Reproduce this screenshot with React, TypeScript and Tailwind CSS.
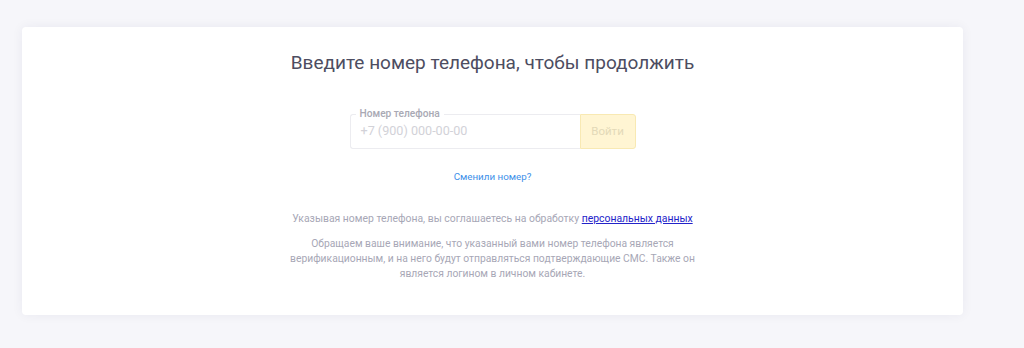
import React from 'react';

export default function App() {
  return (
    <div className="min-h-[348px] bg-[#f6f6fa] pt-[27px] pl-[22px]" style={{ fontFamily: 'Roboto, "Noto Sans", sans-serif' }}>
      <div className="flex h-[288px] w-[941px] flex-col items-center rounded-[4px] bg-white pt-[24px] shadow-[0_0_12px_rgba(40,40,80,0.06)]">
        <h1 className="text-[19px] leading-[24px] text-[#4d4d61]">Введите номер телефона, чтобы продолжить</h1>

        <div className="relative mt-[39px] flex h-[35px] w-[286px]">
          <div className="flex flex-1 items-center rounded-l-[3px] border border-r-0 border-[#ececf0] pl-[10px]">
            <span className="text-[12.6px] text-[#d2d2d8]">+7 (900) 000-00-00</span>
          </div>
          <button className="w-[56px] rounded-r-[3px] border border-[#f8e9b3] bg-[#fff5d3] text-[11.5px] text-[#e3d9b8]">
            Войти
          </button>
          <span className="absolute left-[6px] top-[-6px] bg-white px-[4px] text-[10.2px] leading-[12px] font-medium text-[#a9a9b4]">
            Номер телефона
          </span>
        </div>

        <a className="mt-[21px] text-[9.8px] leading-[14px] text-[#3d8fe9]">Сменили номер?</a>

        <p className="mt-[28px] text-[10.4px] leading-[14px] text-[#a7a7b6]">
          Указывая номер телефона, вы соглашаетесь на обработку{' '}
          <a className="text-[#2323c9] underline">персональных данных</a>
        </p>

        <p className="mt-[10px] max-w-[412px] text-center text-[10.3px] leading-[15px] text-[#a7a7b6]">
          Обращаем ваше внимание, что указанный вами номер телефона является верификационным, и на него будут отправляться подтверждающие СМС. Также он является логином в личном кабинете.
        </p>
      </div>
    </div>
  );
}
